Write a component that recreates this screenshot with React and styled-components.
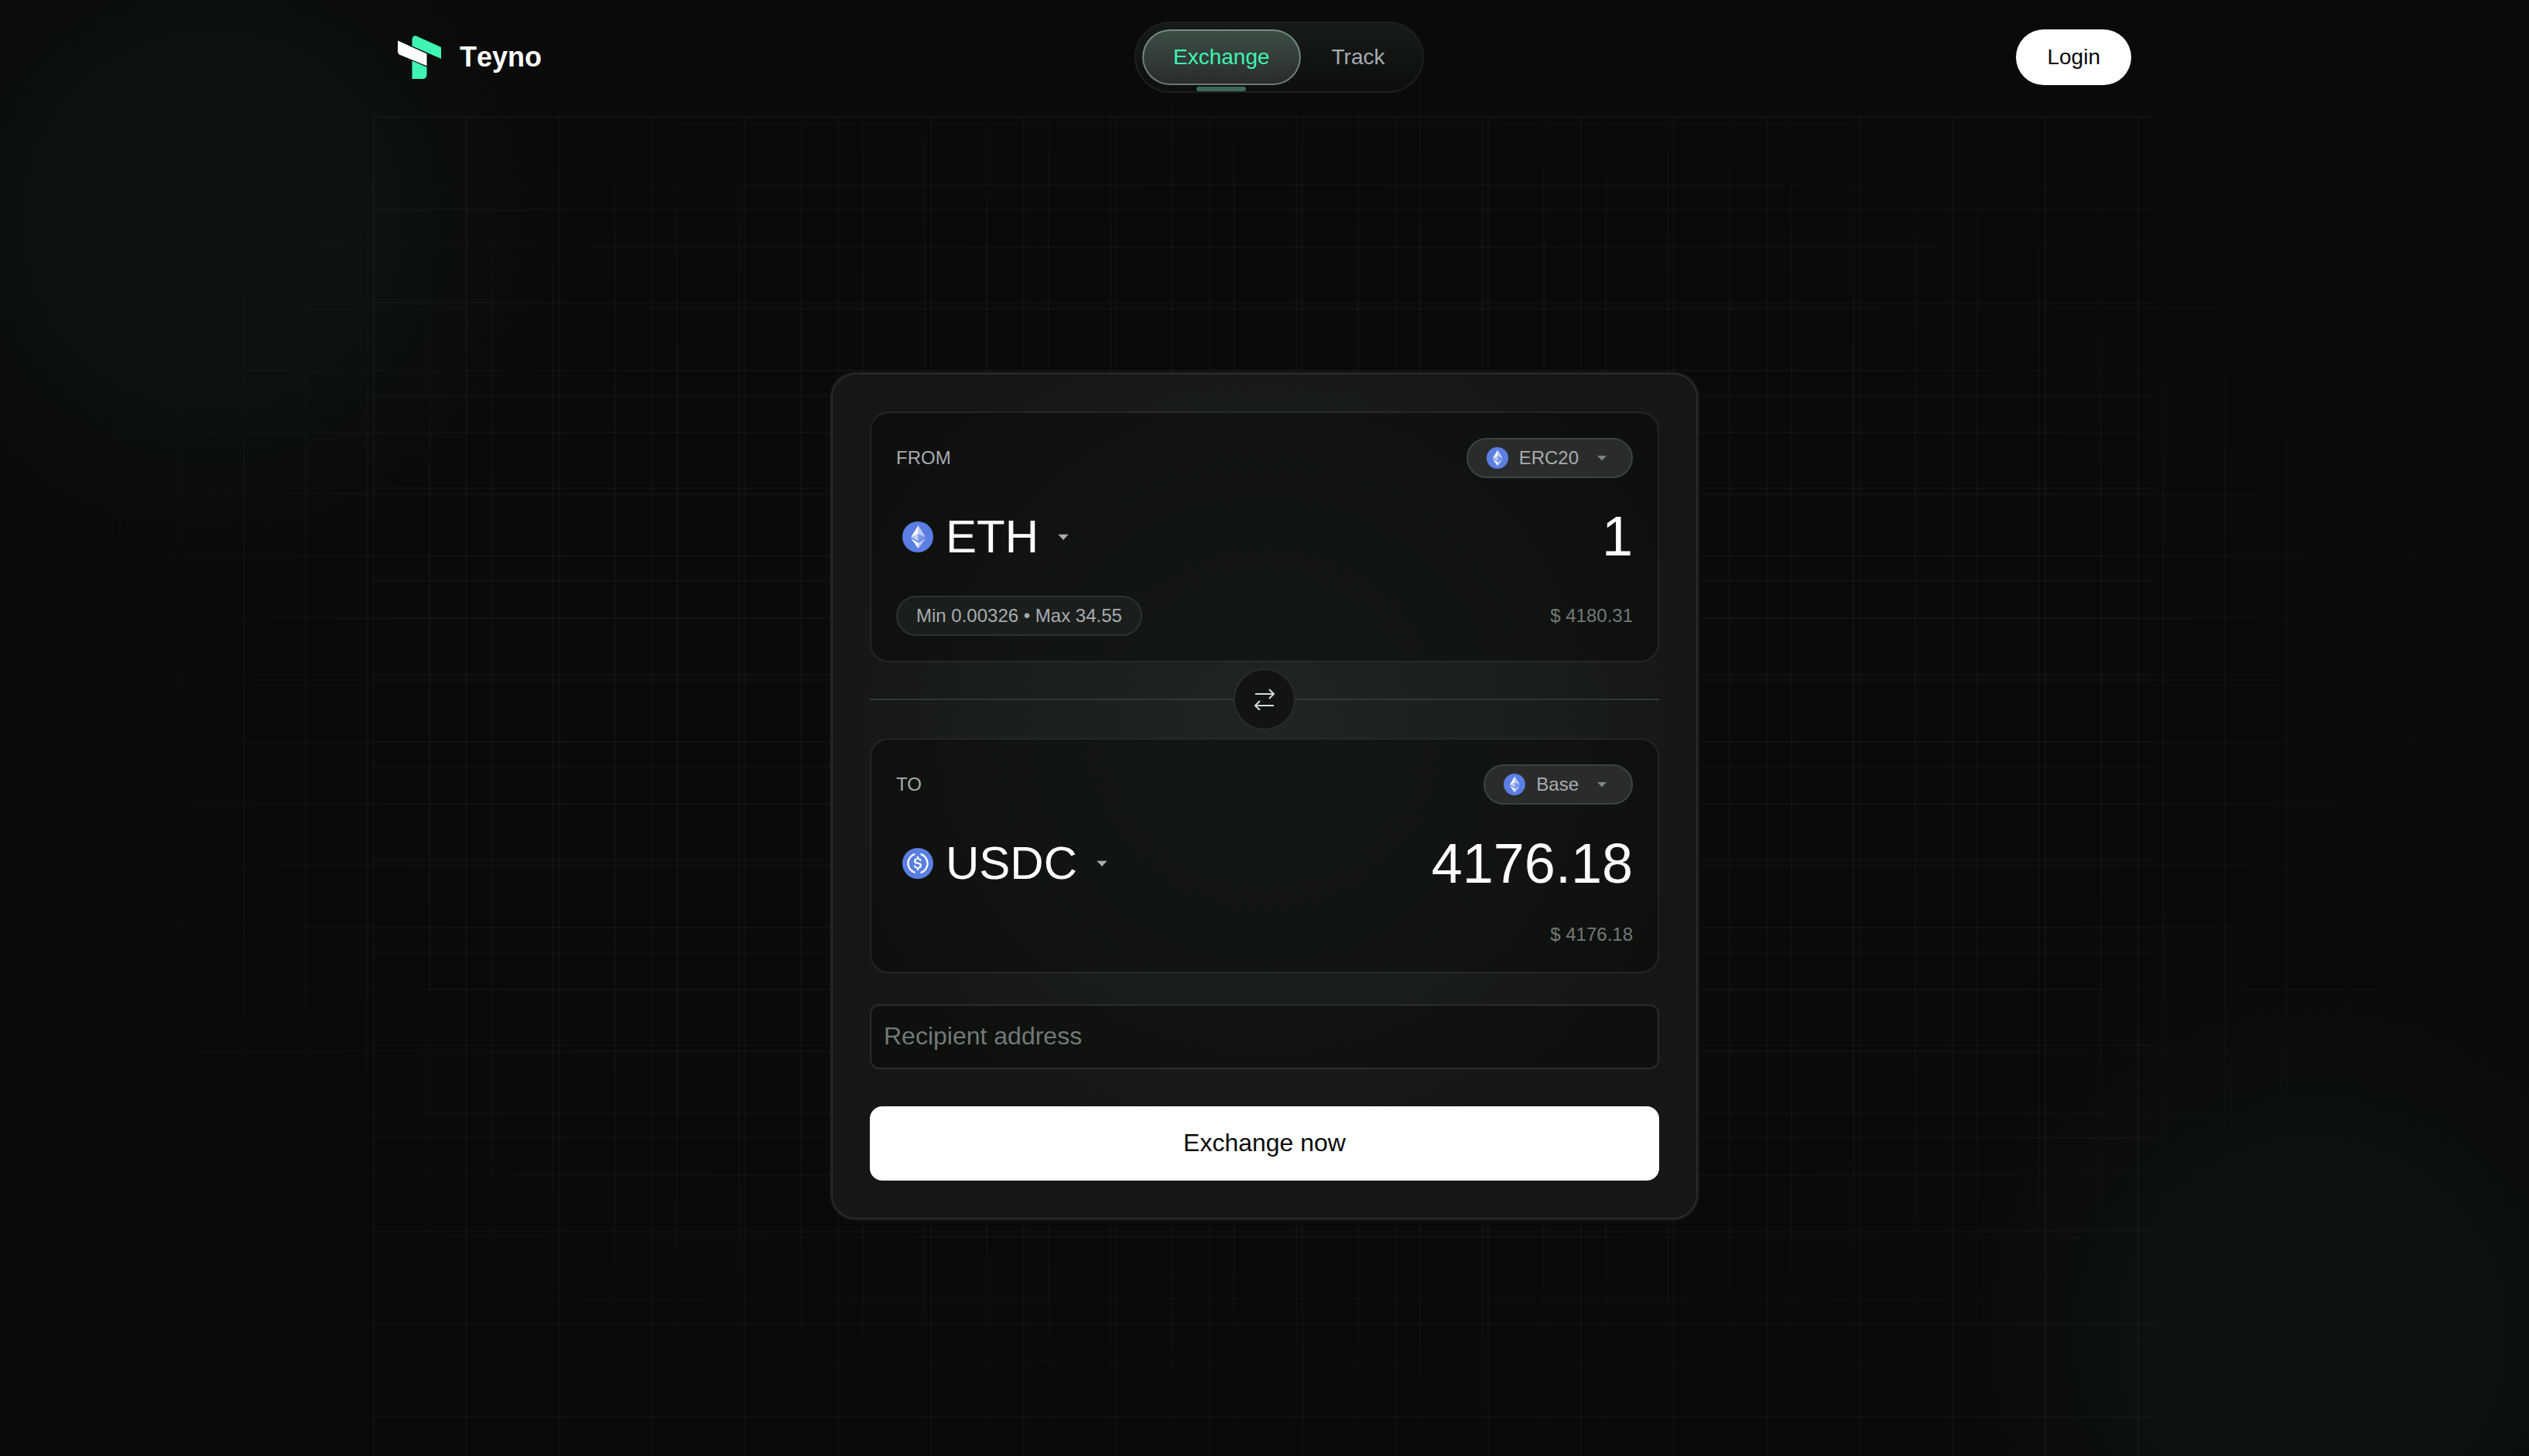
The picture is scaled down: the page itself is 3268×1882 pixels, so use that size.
import React, { useState } from 'react';
import styled, { createGlobalStyle } from 'styled-components';

const NETWORKS = ['ERC20', 'Base', 'Arbitrum', 'Optimism'];
const ASSETS = ['ETH', 'USDC'];

const EthIcon = ({ size }) => (
  <svg width={size} height={size} viewBox="0 0 32 32" aria-hidden="true">
    <circle cx="16" cy="16" r="16" fill="#5b7ee2" />
    <g fill="#fff">
      <path fillOpacity=".6" d="M16.498 4v8.87l7.497 3.35z" />
      <path d="M16.498 4L9 16.22l7.498-3.35z" />
      <path fillOpacity=".6" d="M16.498 21.968v6.027L24 17.616z" />
      <path d="M16.498 27.995v-6.028L9 17.616z" />
      <path fillOpacity=".2" d="M16.498 20.573l7.497-4.353-7.497-3.348z" />
      <path fillOpacity=".6" d="M9 16.22l7.498 4.353v-7.701z" />
    </g>
  </svg>
);

const UsdcIcon = ({ size }) => (
  <svg width={size} height={size} viewBox="0 0 32 32" aria-hidden="true">
    <circle cx="16" cy="16" r="16" fill="#5b7ee2" />
    <g fill="#fff">
      <path d="M20.022 18.124c0-2.124-1.28-2.852-3.84-3.156-1.828-.243-2.193-.728-2.193-1.578 0-.85.61-1.396 1.828-1.396 1.097 0 1.707.364 2.011 1.275a.458.458 0 00.427.303h.975a.416.416 0 00.427-.425v-.06a3.04 3.04 0 00-2.743-2.489V9.142c0-.243-.183-.425-.487-.486h-.915c-.243 0-.426.182-.487.486v1.396c-1.829.242-2.986 1.456-2.986 2.974 0 2.002 1.218 2.791 3.778 3.095 1.707.303 2.255.668 2.255 1.639 0 .97-.853 1.638-2.011 1.638-1.585 0-2.133-.667-2.316-1.578-.06-.242-.244-.364-.427-.364h-1.036a.416.416 0 00-.426.425v.06c.243 1.518 1.219 2.61 3.23 2.914v1.457c0 .242.183.425.487.485h.915c.243 0 .426-.182.487-.485V21.34c1.829-.303 3.047-1.578 3.047-3.217z" />
      <path d="M12.892 24.497c-4.754-1.7-7.192-6.98-5.424-11.653.914-2.55 2.925-4.491 5.424-5.402.244-.121.365-.303.365-.607v-.85c0-.242-.121-.424-.365-.485-.061 0-.183 0-.244.06a10.895 10.895 0 00-7.13 13.717c1.096 3.4 3.717 6.01 7.13 7.102.244.121.488 0 .548-.243.061-.06.061-.122.061-.243v-.85c0-.182-.182-.424-.365-.546zm6.46-18.936c-.244-.122-.488 0-.548.242-.061.061-.061.122-.061.243v.85c0 .243.182.485.365.607 4.754 1.7 7.192 6.98 5.424 11.653-.914 2.55-2.925 4.491-5.424 5.402-.244.121-.365.303-.365.607v.85c0 .242.121.424.365.485.061 0 .183 0 .244-.06a10.895 10.895 0 007.13-13.717c-1.096-3.46-3.778-6.07-7.13-7.162z" />
    </g>
  </svg>
);

const Caret = ({ size }) => (
  <svg width={size} height={size} viewBox="0 0 24 24" fill="currentColor" aria-hidden="true">
    <path d="M7 9.5h10L12 15z" />
  </svg>
);

const ICONS = { ETH: EthIcon, USDC: UsdcIcon };

const Logo = () => (
  <svg width="56" height="56" viewBox="0 0 56 56" aria-hidden="true">
    <path
      fill="#40f4b4"
      d="M18.5 13.5V5.500C18.500 1.500 20.500-.8 24 .5L56 15V30Z"
    />
    <path fill="#fff" d="M0 6.500L37.500 23.500V39.200L3.200 25Q0 23.600 0 20.500Z" />
    <path fill="#40f4b4" d="M18.500 32.500L37.500 40.700V50Q37.500 56 32 56H18.500Z" />
  </svg>
);

const SwapIcon = () => (
  <svg
    width="28"
    height="28"
    viewBox="0 0 28 28"
    fill="none"
    stroke="#d3dbd8"
    strokeWidth="2"
    aria-hidden="true"
  >
    <path d="M2 7h24M20 1l6 6-6 6" />
    <path d="M26 22H2M8 16l-6 6 6 6" />
  </svg>
);

const NetworkSelect = ({ label, value, onChange }) => (
  <NetworkChip>
    <EthIcon size={28} />
    <ChipSelect aria-label={label} value={value} onChange={(e) => onChange(e.target.value)}>
      {NETWORKS.map((network) => (
        <option key={network}>{network}</option>
      ))}
    </ChipSelect>
    <Caret size={28} />
  </NetworkChip>
);

const AssetSelect = ({ label, value, onChange }) => {
  const Icon = ICONS[value];
  return (
    <AssetPicker>
      <Icon size={40} />
      <AssetDropdown aria-label={label} value={value} onChange={(e) => onChange(e.target.value)}>
        {ASSETS.map((asset) => (
          <option key={asset}>{asset}</option>
        ))}
      </AssetDropdown>
      <Caret size={32} />
    </AssetPicker>
  );
};

const App = () => {
  const [fromAsset, setFromAsset] = useState('ETH');
  const [toAsset, setToAsset] = useState('USDC');
  const [fromNetwork, setFromNetwork] = useState('ERC20');
  const [toNetwork, setToNetwork] = useState('Base');
  const [amount, setAmount] = useState('1');
  const [address, setAddress] = useState('');

  const handleSwap = () => {
    setFromAsset(toAsset);
    setToAsset(fromAsset);
    setFromNetwork(toNetwork);
    setToNetwork(fromNetwork);
  };

  return (
    <Page>
      <GlobalStyle />
      <Header>
        <HeaderInner>
          <Brand href="#">
            <Logo />
            Teyno
          </Brand>
          <Nav>
            <NavLink href="#exchange" $active>
              Exchange
            </NavLink>
            <NavLink href="#track">Track</NavLink>
          </Nav>
          <LoginButton type="button">Login</LoginButton>
        </HeaderInner>
      </Header>

      <Main>
        <Card onSubmit={(e) => e.preventDefault()}>
          <Panel>
            <Row>
              <Label htmlFor="amount">FROM</Label>
              <NetworkSelect label="From network" value={fromNetwork} onChange={setFromNetwork} />
            </Row>
            <AmountRow>
              <AssetSelect label="From asset" value={fromAsset} onChange={setFromAsset} />
              <AmountInput
                id="amount"
                inputMode="decimal"
                value={amount}
                onChange={(e) => setAmount(e.target.value)}
              />
            </AmountRow>
            <Row>
              <Limits>Min 0.00326 • Max 34.55</Limits>
              <Fiat>$ 4180.31</Fiat>
            </Row>
          </Panel>

          <Divider>
            <SwapButton type="button" aria-label="Swap assets" onClick={handleSwap}>
              <SwapIcon />
            </SwapButton>
          </Divider>

          <Panel>
            <Row>
              <Label as="span">TO</Label>
              <NetworkSelect label="To network" value={toNetwork} onChange={setToNetwork} />
            </Row>
            <AmountRow>
              <AssetSelect label="To asset" value={toAsset} onChange={setToAsset} />
              <AmountOutput>4176.18</AmountOutput>
            </AmountRow>
            <Row $end>
              <Fiat>$ 4176.18</Fiat>
            </Row>
          </Panel>

          <AddressInput
            aria-label="Recipient address"
            placeholder="Recipient address"
            value={address}
            onChange={(e) => setAddress(e.target.value)}
          />
          <SubmitButton type="submit">Exchange now</SubmitButton>
        </Card>
      </Main>
    </Page>
  );
};

const GlobalStyle = createGlobalStyle`
  * {
    box-sizing: border-box;
  }

  body {
    margin: 0;
    background: #0a0a0a;
    color: #fff;
    font-family: 'Liberation Sans', Arial, sans-serif;
  }

  button,
  input,
  select {
    font-family: inherit;
  }

  svg {
    display: block;
    flex-shrink: 0;
  }
`;

const Page = styled.div`
  position: relative;
  isolation: isolate;
  display: flex;
  flex-direction: column;
  min-height: 100vh;
  background:
    radial-gradient(circle at 275px 285px, #0d140f 0, #0d140f 170px, rgba(13, 20, 15, 0) 440px),
    radial-gradient(
      circle at calc(100% - 280px) calc(100% - 160px),
      #0d140f 0,
      #0d140f 170px,
      rgba(13, 20, 15, 0) 460px
    );

  /* fine 80px grid fading out towards the edges */
  &::before {
    content: '';
    position: absolute;
    inset: 0;
    z-index: -1;
    background-image:
      linear-gradient(to right, rgba(255, 255, 255, 0.03) 2px, transparent 2px),
      linear-gradient(to bottom, rgba(255, 255, 255, 0.03) 2px, transparent 2px);
    background-size: 80px 80px;
    background-position: center -2px;
    mask-image: radial-gradient(ellipse at center, #000 48%, transparent 76%);
  }
`;

const Header = styled.header`
  padding: 28px 32px 30px;
`;

const HeaderInner = styled.div`
  display: flex;
  align-items: center;
  justify-content: space-between;
  width: 100%;
  max-width: 2240px;
  margin: 0 auto;
`;

const Brand = styled.a`
  display: flex;
  align-items: center;
  gap: 24px;
  color: #fff;
  font-size: 36px;
  font-weight: 700;
  font-kerning: none;
  line-height: 40px;
  text-decoration: none;
`;

const Nav = styled.nav`
  display: flex;
  padding: 8px;
  border: 2px solid #1b201e;
  border-radius: 46px;
  background: linear-gradient(#161a19, #0c0f0c);
`;

const NavLink = styled.a`
  position: relative;
  padding: 18px 38px;
  border: 2px solid ${({ $active }) => ($active ? 'rgba(190, 220, 205, 0.45)' : 'transparent')};
  border-radius: 36px;
  background: ${({ $active }) => ($active ? 'linear-gradient(#3c4f45, #2a2b2b) border-box' : 'none')};
  color: ${({ $active }) => ($active ? '#40f4b4' : '#a9abb0')};
  font-size: 28px;
  line-height: 32px;
  text-decoration: none;

  &::after {
    content: '';
    display: ${({ $active }) => ($active ? 'block' : 'none')};
    position: absolute;
    top: 100%;
    left: 50%;
    width: 64px;
    height: 6px;
    margin-top: 4px;
    border-radius: 3px;
    background: #3e6a58;
    transform: translateX(-50%);
  }
`;

const LoginButton = styled.button`
  height: 72px;
  padding: 0 40px;
  border: none;
  border-radius: 36px;
  background: #fff;
  color: #0a0a0a;
  font-size: 28px;
  cursor: pointer;
`;

const Main = styled.main`
  flex: 1;
  display: flex;
  justify-content: center;
  align-items: flex-start;
  width: 100%;
  max-width: 2304px;
  margin: 0 auto;
  padding: 332px 32px 120px;
  background-image:
    linear-gradient(to right, rgba(255, 255, 255, 0.024) 2px, transparent 2px),
    linear-gradient(to bottom, rgba(255, 255, 255, 0.024) 2px, transparent 2px);
  background-size: 120px 120px;
`;

const Card = styled.form`
  display: flex;
  flex-direction: column;
  width: 100%;
  max-width: 1120px;
  padding: 48px;
  border: 2px solid #2a2c2b;
  border-radius: 32px;
  background: radial-gradient(circle at 50% 42%, #1f2523 0, #1b201f 280px, #151716 560px);
  box-shadow: 0 0 0 2px #151716;
`;

const Panel = styled.section`
  display: flex;
  flex-direction: column;
  gap: 32px;
  padding: 32px;
  border: 2px solid rgba(255, 255, 255, 0.09);
  border-radius: 24px;
  background: rgba(8, 9, 5, 0.5);
`;

const Row = styled.div`
  display: flex;
  align-items: center;
  justify-content: ${({ $end }) => ($end ? 'flex-end' : 'space-between')};
`;

const AmountRow = styled(Row)`
  height: 88px;
`;

const Label = styled.label`
  color: #a9abae;
  font-size: 24px;
  line-height: 32px;
`;

const Chip = styled.div`
  display: flex;
  align-items: center;
  height: 52px;
  padding: 0 24px;
  border: 2px solid #38443f;
  border-radius: 26px;
  background: #2a2c2c;
  font-size: 24px;
`;

const NetworkChip = styled(Chip)`
  color: #7d8784;

  svg:first-child {
    margin-right: 14px;
  }
`;

/* the dropdown stretches under the caret so the whole tail is clickable */
const PlainSelect = styled.select`
  appearance: none;
  field-sizing: content;
  padding: 0 0 2px;
  border: none;
  outline: none;
  background: transparent;
  cursor: pointer;

  option {
    background: #151716;
    font-size: 24px;
  }

  & + svg {
    pointer-events: none;
  }
`;

const ChipSelect = styled(PlainSelect)`
  margin-right: -28px;
  padding-right: 44px;
  color: #a9abae;
  font-size: 24px;
`;

const AssetPicker = styled.div`
  display: flex;
  align-items: center;
  gap: 16px;
  padding: 0 8px;
  color: #a9abae;
`;

const AssetDropdown = styled(PlainSelect)`
  margin-right: -48px;
  padding-right: 48px;
  color: #fff;
  font-size: 60px;
`;

const AmountInput = styled.input`
  flex: 1;
  min-width: 0;
  padding: 0 0 2px;
  border: none;
  outline: none;
  background: transparent;
  color: #fff;
  font-size: 72px;
  text-align: right;
`;

const AmountOutput = styled.output`
  font-size: 72px;
  line-height: 88px;
`;

const Limits = styled(Chip)`
  border-color: #2b3230;
  background: #1a1f1d;
  color: #a9abae;
`;

const Fiat = styled.span`
  color: #717a77;
  font-size: 24px;
  line-height: 32px;
`;

const Divider = styled.div`
  display: flex;
  align-items: center;
  margin: 8px 0 10px;

  &::before,
  &::after {
    content: '';
    flex: 1;
    height: 2px;
    background: #303835;
  }
`;

const SwapButton = styled.button`
  display: flex;
  align-items: center;
  justify-content: center;
  width: 80px;
  height: 80px;
  padding: 0;
  border: 2px solid #2a2c2b;
  border-radius: 50%;
  background: #111412;
  cursor: pointer;
`;

const AddressInput = styled.input`
  height: 84px;
  margin-top: 40px;
  padding: 0 16px 2px;
  border: 2px solid #2a2c2b;
  border-radius: 12px;
  outline: none;
  background: rgba(8, 9, 5, 0.5);
  color: #fff;
  font-size: 32px;

  &::placeholder {
    color: #717a77;
    opacity: 1;
  }
`;

const SubmitButton = styled.button`
  height: 96px;
  margin-top: 48px;
  padding: 0 16px 2px;
  border: none;
  border-radius: 16px;
  background: #fff;
  color: #0a0a0a;
  font-size: 32px;
  cursor: pointer;
`;

export default App;
